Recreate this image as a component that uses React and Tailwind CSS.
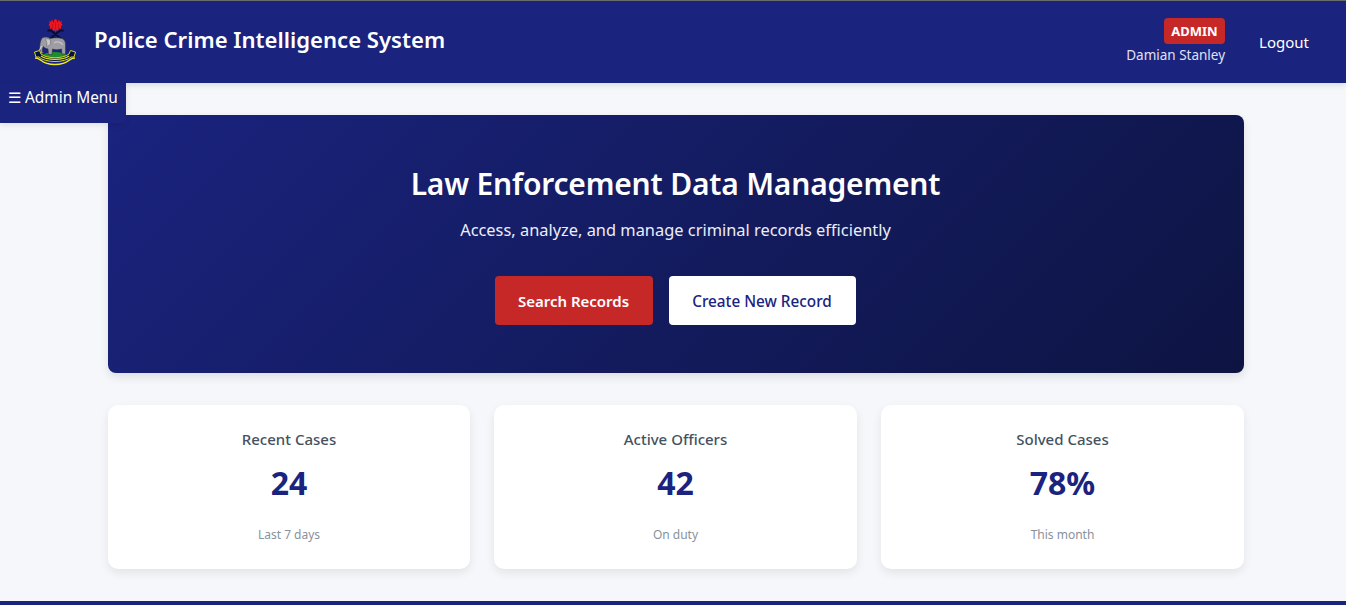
import React from "react";

const font = "font-['Noto_Sans','Open_Sans',sans-serif]";

const stats = [
  { title: "Recent Cases", value: "24", note: "Last 7 days" },
  { title: "Active Officers", value: "42", note: "On duty" },
  { title: "Solved Cases", value: "78%", note: "This month" },
];

const PoliceCrest = () => (
  <svg viewBox="0 0 50 50" className="w-[50px] h-[50px] shrink-0">
    {/* eagle */}
    <path d="M25.5 2 L27 3 L27 6 L29 2.5 L30 5 L31.5 3.5 L31.5 7 L32.5 7 L31 10 L31 12 L29 11 L28 14 L26.5 13 L25.5 15 L24.5 13 L23 14 L22 11 L20 12 L20 10 L18.5 7 L19.5 7 L19.5 3.5 L21 5 L22 2.5 L24 6 L24 3 Z" fill="#f0141e" />
    <path d="M25.5 5 V13 M22.5 7 V11 M28.5 7 V11" stroke="#a01020" strokeWidth="0.5" />
    {/* wreath */}
    <path d="M17.5 13.5 L21 13.5 L30 21 M33.5 13.5 L30 13.5 L21 21 M20 21 H31" fill="none" stroke="#080c30" strokeWidth="1.8" />
    {/* green ground */}
    <path d="M12 38 C19 34 31 34 37 38 L33 41.5 L16 41.5 Z" fill="#1c8f28" />
    {/* elephant, facing left */}
    <path d="M12 21 C15 19.5 18 20 20 21.5 C24 20.5 29 20.5 32 21.5 C35 22.5 36 26 35.5 30 L35.5 37 L32 37 L31.5 32 C28 33 25 33 22.5 32 L22 37.5 L18.5 37.5 L18 32 C16 31.5 14.5 31 13.5 29.5 C12.5 31 12 33 12.5 35 L13.8 36 L11 36.5 C9.5 33 9 26 12 21 Z" fill="#9d9da3" stroke="#34343e" strokeWidth="0.6" />
    <path d="M15.5 22 C19 21 21 23 20.5 26 C20 28.5 18 29.5 16.5 29 C17.5 27 16.5 24 15.5 22 Z" fill="#c9c9ce" stroke="#4a4a54" strokeWidth="0.4" />
    <path d="M11.5 29 L9.5 33" stroke="#e8e8ea" strokeWidth="0.9" />
    <path d="M24 26 C27 24 31 25 33 28" fill="none" stroke="#c4c4c9" strokeWidth="1.2" />
    {/* ribbon */}
    <path d="M4.5 35 L9.5 33.5 L11 37 C17 42 33 42 39 37 L40.5 33.5 L45.5 35 L44 40 L41 40 C35 46 15 46 9 40 L6 40 Z" fill="#0b1040" stroke="#d8dc1c" strokeWidth="1" />
    <path d="M11 39 C17 43.5 33 43.5 39 39" fill="none" stroke="#e4e61c" strokeWidth="1.2" />
    <path d="M5 41 C8 41 9 42 10.5 43 C18 49 32 49 39.5 43 C41 42 42 41 45 41" fill="none" stroke="#eef01e" strokeWidth="1.5" />
  </svg>
);

const StatCard = ({ title, value, note }) => (
  <div className="bg-white rounded-[10px] shadow-[0_4px_10px_rgba(0,0,0,0.08)] h-[164px] flex flex-col items-center pt-[24px]">
    <h3 className="text-[15px] leading-[21px] font-medium text-[#44525f]">{title}</h3>
    <p className="mt-[11px] text-[32px] leading-[44px] font-bold text-[#1a237e]">{value}</p>
    <p className="mt-[21px] text-[12px] leading-[18px] text-[#87929c]">{note}</p>
  </div>
);

export default function App() {
  return (
    <div className={`${font} relative min-h-[605px] bg-[#f5f7fb] overflow-hidden`}>
      <header className="h-[83px] bg-[#1a237e] border-t border-[#6b6b6b] shadow-[0_2px_6px_rgba(0,0,0,0.12)] flex items-center justify-between pl-[30px] pr-[37px]">
        <div className="flex items-center gap-[14px]">
          <PoliceCrest />
          <h1 className="text-[22.1px] font-semibold text-white leading-[32px] -mt-[6px]">
            Police Crime Intelligence System
          </h1>
        </div>
        <div className="flex items-center gap-[34px]">
          <div className="flex flex-col items-end">
            <span className="bg-[#c62828] text-white text-[13px] leading-[20px] font-bold rounded-[4px] px-[7.5px] py-[3px]">
              ADMIN
            </span>
            <span className="text-[13.5px] leading-[22px] text-[#e0e2f2]">Damian Stanley</span>
          </div>
          <a className="text-[15px] text-white">Logout</a>
        </div>
      </header>

      <button className="absolute left-0 top-[83px] w-[126px] h-[40px] pb-[11px] bg-[#1a237e] rounded-br-[4px] text-white text-[15.4px] text-left pl-[8px] shadow-[0_2px_6px_rgba(0,0,0,0.1)]">
        ☰ Admin Menu
      </button>

      <main className="w-[1136px] ml-[108px] pt-[32px] pb-[32px]">
        <section className="h-[258px] rounded-[8px] bg-[linear-gradient(135deg,#1a237e,#0d1442)] shadow-[0_4px_10px_rgba(0,0,0,0.1)] flex flex-col items-center pt-[47px]">
          <h2 className="text-[30px] leading-[44px] font-semibold tracking-[-0.2px] text-white pr-[1px]">
            Law Enforcement Data Management
          </h2>
          <p className="mt-[12px] text-[16.4px] leading-[24px] text-[#eceefa] pr-[1px]">
            Access, analyze, and manage criminal records efficiently
          </p>
          <div className="mt-[34px] flex gap-[16px] pr-[2px]">
            <button className="w-[158px] h-[49px] pt-[2px] rounded-[4px] bg-[#c62828] text-white text-[15px] font-semibold">
              Search Records
            </button>
            <button className="w-[187px] h-[49px] pt-[2px] rounded-[4px] bg-white text-[#1a237e] text-[15.3px] font-medium">
              Create New Record
            </button>
          </div>
        </section>

        <section className="mt-[32px] grid grid-cols-[362px_363px_363px] gap-[24px]">
          {stats.map((s) => (
            <StatCard key={s.title} {...s} />
          ))}
        </section>
      </main>

      <footer className="h-[4px] bg-[#1a237e]" />
    </div>
  );
}
